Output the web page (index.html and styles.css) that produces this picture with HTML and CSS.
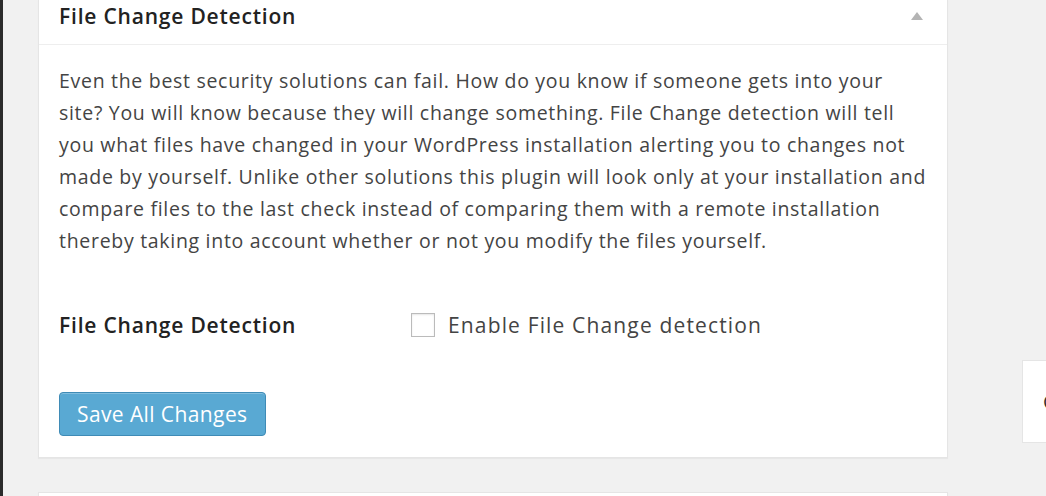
FILE: index.html
```html
<!DOCTYPE html>
<html>
<head>
<meta charset="utf-8">
<link rel="stylesheet" href="styles.css">
</head>
<body>
<div class="page">
  <div class="edge"></div>
  <div class="main">
    <div class="card">
      <div class="card-head">
        <h3 class="card-title">File Change Detection</h3>
        <span class="toggle"></span>
      </div>
      <div class="card-body">
        <p class="desc">Even the best security solutions can fail. How do you know if someone gets into your site? You will know because they will change something. File Change detection will tell you what files have changed in your WordPress installation alerting you to changes not made by yourself. Unlike other solutions this plugin will look only at your installation and compare files to the last check instead of comparing them with a remote installation thereby taking into account whether or not you modify the files yourself.</p>
        <div class="form-row">
          <div class="form-label">File Change Detection</div>
          <label class="form-field"><span class="checkbox"></span><span class="check-label">Enable File Change detection</span></label>
        </div>
        <button class="btn-primary">Save All Changes</button>
      </div>
    </div>
    <div class="card next"></div>
  </div>
  <div class="side">
    <div class="side-box">Check</div>
  </div>
</div>
</body>
</html>
```

FILE: styles.css
```css
html, body {
  margin: 0;
  padding: 0;
  background: #f1f1f1;
  overflow: hidden;
  height: 496px;
}
body {
  font-family: "Open Sans", "Noto Sans", sans-serif;
  color: #444;
}
.page {
  display: flex;
  height: 496px;
  width: 1046px;
  overflow: hidden;
}
.edge {
  width: 3px;
  flex: 0 0 3px;
  background: #2b2b2b;
}
.main {
  margin-left: 35px;
  width: 910px;
  flex: 0 0 910px;
}
.card {
  background: #fff;
  border: 1px solid #e5e5e5;
  border-top: none;
  box-shadow: 0 1px 1px rgba(0,0,0,0.04);
}
.card-head {
  display: flex;
  align-items: center;
  justify-content: space-between;
  padding: 2px 20px 14px 20px;
  border-bottom: 1px solid #eeeeee;
}
.card-title {
  margin: 0;
  font-size: 21px;
  font-weight: 600;
  line-height: 28px;
  letter-spacing: 0.8px;
  color: #222;
}
.toggle {
  width: 0;
  height: 0;
  border-left: 6px solid transparent;
  border-right: 6px solid transparent;
  border-bottom: 8px solid #b4b4b4;
  margin-right: 4px;
}
.card-body {
  padding: 20px 20px 21px 20px;
}
.desc {
  margin: 0;
  font-size: 19.5px;
  line-height: 32px;
  letter-spacing: 0.7px;
  color: #444;
}
.form-row {
  display: flex;
  align-items: center;
  height: 50px;
  margin-top: 43px;
}
.form-label {
  width: 352px;
  flex: 0 0 352px;
  font-size: 21px;
  font-weight: 600;
  letter-spacing: 0.8px;
  color: #222;
}
.form-field {
  display: flex;
  align-items: center;
}
.checkbox {
  width: 22px;
  height: 22px;
  border: 1px solid #bbb;
  box-shadow: inset 0 1px 2px rgba(0,0,0,0.1);
  background: #fff;
  margin-right: 13px;
}
.check-label {
  font-size: 21px;
  letter-spacing: 1.15px;
  color: #444;
}
.btn-primary {
  display: block;
  margin-top: 42px;
  height: 44px;
  padding: 0 17px;
  background: #59a9d3;
  border: 1px solid #3f8bb6;
  border-radius: 4px;
  color: #fff;
  font-family: "Open Sans", "Noto Sans", sans-serif;
  font-size: 21px;
  letter-spacing: 0.4px;
  line-height: 40px;
  box-shadow: inset 0 1px 0 rgba(255,255,255,0.25);
}
.card.next {
  margin-top: 34px;
  border-top: 1px solid #e5e5e5;
  height: 40px;
}
.side {
  margin-left: 74px;
  padding-top: 360px;
  flex: 0 0 auto;
}
.side-box {
  width: 200px;
  height: 81px;
  background: #fff;
  border: 1px solid #e5e5e5;
  padding-left: 20px;
  font-size: 20px;
  line-height: 81px;
  color: #333;
}
```
